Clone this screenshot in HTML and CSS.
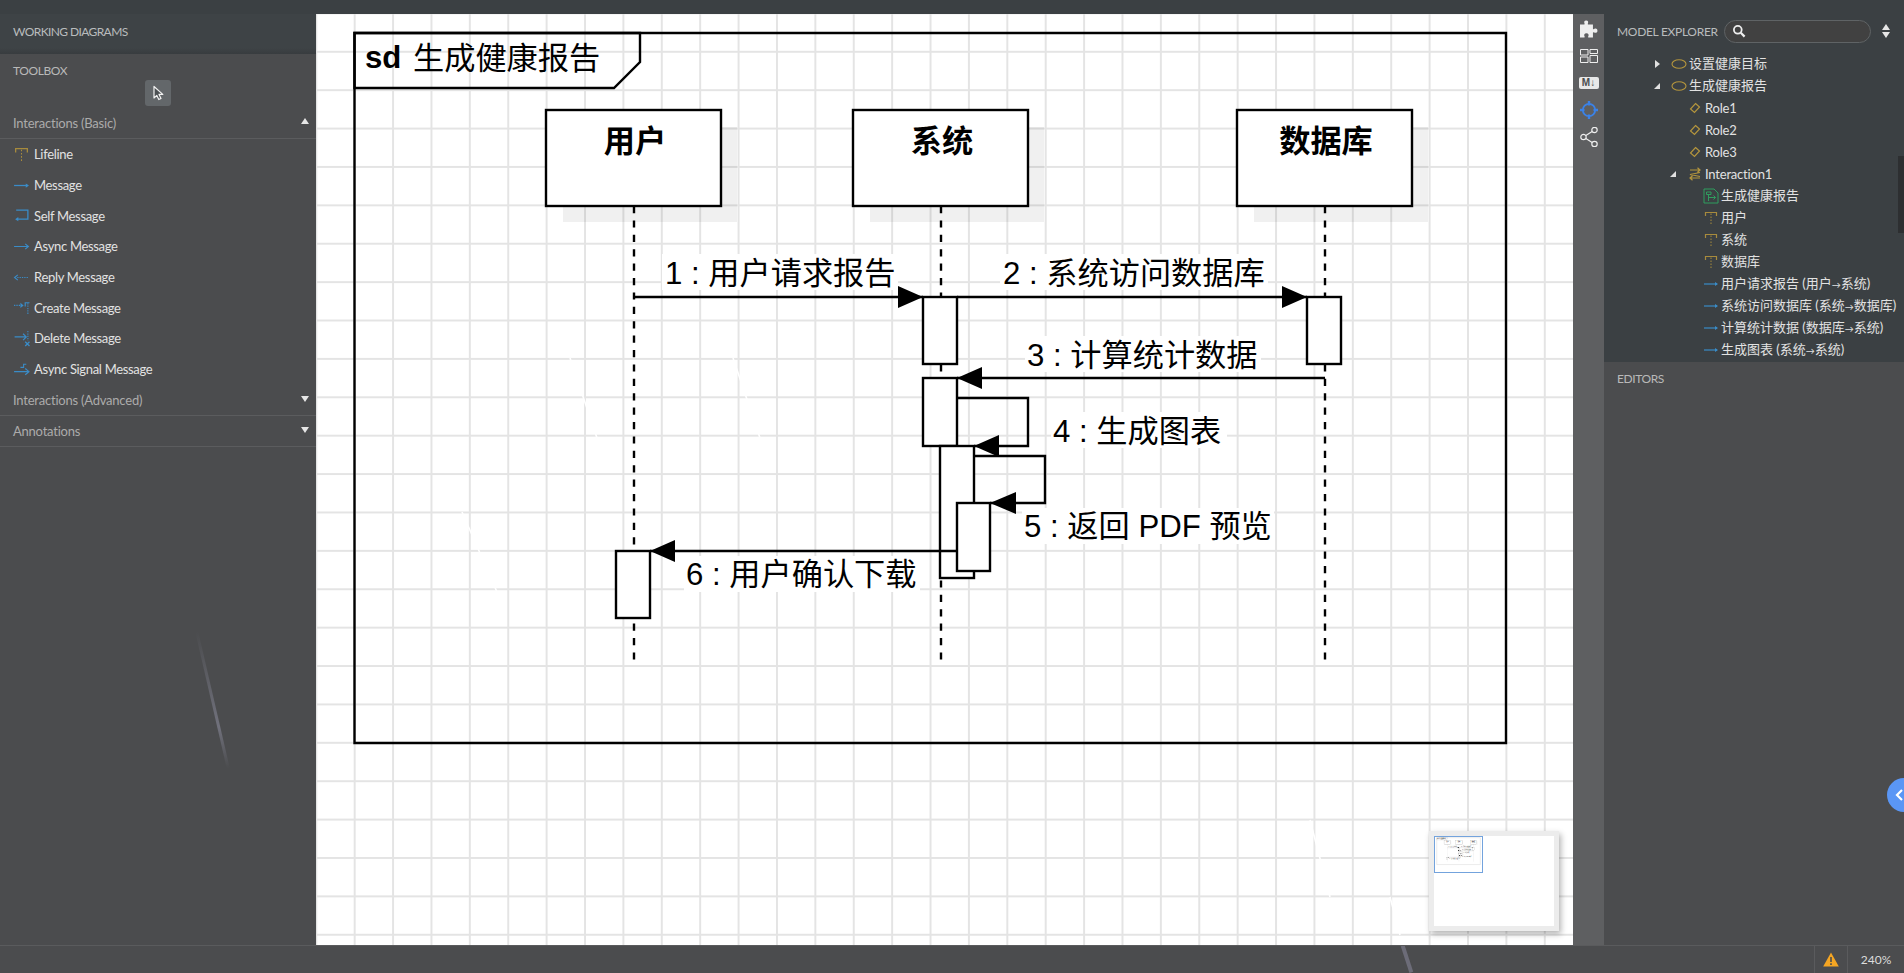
FILE: index.html
```html
<!DOCTYPE html>
<html lang="zh">

<head>
    <meta charset="UTF-8">
    <meta name="viewport" content="width=device-width, initial-scale=1.0">
    <title>StarUML</title>
    <link rel="stylesheet" href="styles.css">
</head>

<body>

    <svg class="sprite" aria-hidden="true">
        <symbol id="i-lifeline" viewBox="0 0 16 16">
            <path d="M2.5 6V2.5H13.5V6" fill="none" stroke="#a78b3d" stroke-width="1.2" />
            <path d="M8 3.5V15" fill="none" stroke="#a78b3d" stroke-width="1" stroke-dasharray="1.5 1.5" />
        </symbol>
        <symbol id="i-message" viewBox="0 0 16 16">
            <path d="M1 8H14" stroke="#3a8cc8" stroke-width="1.2" />
            <path d="M12 6L15 8L12 10Z" fill="#3a8cc8" />
        </symbol>
        <symbol id="i-self" viewBox="0 0 16 16">
            <path d="M3 3H14V11.5H4" fill="none" stroke="#3a8cc8" stroke-width="1.2" />
            <path d="M5 9.5L2 11.5L5 13.5Z" fill="#3a8cc8" />
        </symbol>
        <symbol id="i-async" viewBox="0 0 16 16">
            <path d="M1 8H14.5M11.5 5.5L14.5 8L11.5 10.5" fill="none" stroke="#3a8cc8" stroke-width="1.1" />
        </symbol>
        <symbol id="i-reply" viewBox="0 0 16 16">
            <path d="M4 8H15" stroke="#3a8cc8" stroke-width="1" stroke-dasharray="1.2 1" />
            <path d="M4.5 5.5L1.5 8L4.5 10.5" fill="none" stroke="#3a8cc8" stroke-width="1.1" />
        </symbol>
        <symbol id="i-create" viewBox="0 0 16 16">
            <path d="M1 6H8" stroke="#3a8cc8" stroke-width="1" stroke-dasharray="1.2 1" />
            <path d="M7 3.5L10 6L7 8.5Z" fill="#3a8cc8" />
            <path d="M11.5 7V3.5H15.5" fill="none" stroke="#3a8cc8" stroke-width="1.1" />
            <path d="M14 4V15" stroke="#3a8cc8" stroke-width="1" stroke-dasharray="1.2 1" />
        </symbol>
        <symbol id="i-delete" viewBox="0 0 16 16">
            <path d="M1.5 6.5H12M9.5 3.5L12.5 6.5L9.5 9.5" fill="none" stroke="#3a8cc8" stroke-width="1.1" />
            <path d="M14 1V10" stroke="#3a8cc8" stroke-width="1" stroke-dasharray="1.2 1" />
            <path d="M11.5 11L15.5 15M15.5 11L11.5 15" stroke="#3a8cc8" stroke-width="1.2" />
        </symbol>
        <symbol id="i-signal" viewBox="0 0 16 16">
            <path d="M1 10H15M11.5 7L15 10L11.5 13" fill="none" stroke="#3a8cc8" stroke-width="1.1" />
            <path d="M7 6H10V3H12.5" fill="none" stroke="#3a8cc8" stroke-width="1" />
        </symbol>
        <symbol id="i-oval" viewBox="0 0 16 16">
            <ellipse cx="8" cy="8" rx="7" ry="4.3" fill="none" stroke="#b4953d" stroke-width="1.1" />
        </symbol>
        <symbol id="i-role" viewBox="0 0 16 16">
            <path d="M8.5 3.5L12.5 7L7.5 12.5L3.5 9Z" fill="none" stroke="#b4953d" stroke-width="1.2" />
        </symbol>
        <symbol id="i-interaction" viewBox="0 0 16 16">
            <path d="M3 4H13M10.5 1.8L13 4L10.5 6.2M13 6.5L3 8.5L13 10.5M13 12H3M5.5 9.8L3 12L5.5 14.2" fill="none" stroke="#b4953d" stroke-width="1.2" />
        </symbol>
        <symbol id="i-sequence" viewBox="0 0 16 16">
            <path d="M1 1H11L15 5V15H1Z" fill="none" stroke="#2f9d5f" stroke-width="1" />
            <path d="M3.5 4H8V6.5H3.5ZM5.5 6.5V13M6 9.5H12.5M10.5 7.5L12.5 9.5L10.5 11.5" fill="none" stroke="#2f9d5f" stroke-width="1" />
        </symbol>
    </svg>

    <div class="topbar"></div>

    <div class="workspace">

        <aside class="sidebar">
            <div class="working-title">WORKING DIAGRAMS</div>
            <div class="section-label">TOOLBOX</div>
            <div class="tool-row">
                <span class="tool-btn">
                    <svg width="14" height="16" viewBox="0 0 14 16">
                        <path d="M3 1.5V13L5.8 10.4L7.8 14.5L10 13.4L8 9.4H11.8Z" fill="#4c5053" stroke="#f2f2f2" stroke-width="1.2" stroke-linejoin="round" />
                    </svg>
                </span>
            </div>

            <div class="group-head group-open">Interactions (Basic)<span class="caret caret-up"></span></div>
            <ul class="tool-list">
                <li><svg class="tool-icon"><use href="#i-lifeline" /></svg>Lifeline</li>
                <li><svg class="tool-icon"><use href="#i-message" /></svg>Message</li>
                <li><svg class="tool-icon"><use href="#i-self" /></svg>Self Message</li>
                <li><svg class="tool-icon"><use href="#i-async" /></svg>Async Message</li>
                <li><svg class="tool-icon"><use href="#i-reply" /></svg>Reply Message</li>
                <li><svg class="tool-icon"><use href="#i-create" /></svg>Create Message</li>
                <li><svg class="tool-icon"><use href="#i-delete" /></svg>Delete Message</li>
                <li><svg class="tool-icon"><use href="#i-signal" /></svg>Async Signal Message</li>
            </ul>
            <div class="group-head">Interactions (Advanced)<span class="caret caret-down"></span></div>
            <div class="group-head">Annotations<span class="caret caret-down"></span></div>
            <span class="streak streak-side"></span>
        </aside>

        <main class="canvas">
            <svg class="diagram" viewBox="316 14 1257 931">
                <g id="diagram-art">
                    <g class="scratches">
                        <path d="M733 358L760 438M570 358L597 438M462 512L497 592M1310 820L1330 897M1390 897L1400 935" />
                    </g>

                    <path class="shape" d="M354.500 33H1506V743H354.500Z" />
                    <path class="shape" d="M354.500 33H640V62L614 88H354.500Z" />
                    <text class="label bold" x="365" y="68">sd</text>
                    <text class="label" x="413" y="69">生成健康报告</text>

                    <rect class="shadow" x="563" y="127" width="174" height="95" />
                    <rect class="shadow" x="870" y="127" width="174" height="95" />
                    <rect class="shadow" x="1254" y="127" width="174" height="95" />
                    <rect class="box" x="546" y="110" width="175" height="96" />
                    <rect class="box" x="853" y="110" width="175" height="96" />
                    <rect class="box" x="1237" y="110" width="175" height="96" />
                    <text class="label bold mid" x="635" y="152">用户</text>
                    <text class="label bold mid" x="942" y="152">系统</text>
                    <text class="label bold mid" x="1326" y="152">数据库</text>

                    <path class="dash" d="M634 206V662M941 206V662M1325 206V662" />

                    <rect class="halo" x="662" y="254" width="236" height="36" />
                    <rect class="halo" x="1000" y="254" width="268" height="36" />
                    <rect class="halo" x="1025" y="336" width="236" height="36" />
                    <rect class="halo" x="1051" y="412" width="176" height="36" />
                    <rect class="halo" x="1022" y="508" width="252" height="36" />
                    <rect class="halo" x="684" y="556" width="236" height="36" />
                    <text class="label" x="665" y="284">1 : 用户请求报告</text>
                    <text class="label" x="1003" y="284">2 : 系统访问数据库</text>
                    <text class="label" x="1027" y="366">3 : 计算统计数据</text>
                    <text class="label" x="1053" y="442">4 : 生成图表</text>
                    <text class="label" x="1024" y="537">5 : 返回 PDF 预览</text>
                    <text class="label" x="686" y="585">6 : 用户确认下载</text>

                    <rect class="box" x="923" y="297" width="34" height="67" />
                    <rect class="box" x="1307" y="297" width="34" height="67" />
                    <rect class="box" x="923" y="378" width="34" height="68" />
                    <rect class="box" x="940" y="446" width="34" height="132" />
                    <rect class="box" x="957" y="503" width="33" height="68" />
                    <rect class="box" x="616" y="551" width="34" height="67" />

                    <path class="line" d="M634 297H923M957 297H1307M1325 378H957" />
                    <path class="line" d="M957 398H1028V446H974" />
                    <path class="line" d="M974 456H1045V503H990" />
                    <path class="line" d="M957 551H650" />
                    <path d="M923 297L898 286V308ZM1307 297L1282 286V308ZM957 378L982 367V389ZM974 446L999 435V457ZM990 503L1016 492V514ZM650 551L675 540V562Z" />
                </g>
            </svg>

            <div class="minimap">
                <svg class="minimap-art" viewBox="316 14 1225 925">
                    <use href="#diagram-art" />
                </svg>
            </div>
        </main>

        <nav class="toolstrip">
            <svg width="18" height="18" viewBox="1 1 16 16">
                <path d="M6.500 1.500C8.300 1.500 8.600 2.800 8 4C7.700 4.600 8 5 8.600 5H12.500V8.600C12.500 9.300 13 9.400 13.600 9C14.900 8.200 16.500 8.700 16.500 10.500C16.500 12.300 14.900 12.800 13.600 12C13 11.600 12.500 11.800 12.500 12.400V16.500H8.800C8.100 16.500 8 16 8.400 15.400C9.100 14.100 8.500 12.700 6.700 12.700C4.900 12.700 4.300 14.100 5 15.400C5.400 16 5.200 16.500 4.600 16.500H1V5H4.400C5 5 5.300 4.600 5 4C4.400 2.800 4.700 1.500 6.500 1.500Z" fill="#eeeeee" />
            </svg>
            <svg width="18" height="14" viewBox="0 0 18 14">
                <path d="M.5.5H8V6H.5ZM10 .5H17.500V4.500H10ZM.5 8H8V13.500H.5ZM10 6.500H17.500V13.500H10Z" fill="none" stroke="#eeeeee" stroke-width="1" />
            </svg>
            <span class="md-badge">M↓</span>
            <svg width="18" height="18" viewBox="0 0 18 18">
                <circle cx="9" cy="9" r="6.200" fill="none" stroke="#3b82e8" stroke-width="1.800" />
                <path d="M9 0V4.500M9 13.500V18M0 9H4.500M13.500 9H18" stroke="#3b82e8" stroke-width="2.400" />
            </svg>
            <svg width="18" height="20" viewBox="0 0 18 20">
                <path d="M3.500 10L14.500 3M3.500 10L14.500 17" stroke="#eeeeee" stroke-width="1.200" />
                <circle cx="3.500" cy="10" r="2.700" fill="#5e5f61" stroke="#eeeeee" stroke-width="1.200" />
                <circle cx="14.500" cy="3" r="2.700" fill="#5e5f61" stroke="#eeeeee" stroke-width="1.200" />
                <circle cx="14.500" cy="17" r="2.700" fill="#5e5f61" stroke="#eeeeee" stroke-width="1.200" />
            </svg>
        </nav>

        <aside class="rightbar">
            <section class="explorer">
                <div class="explorer-head">
                    <span class="explorer-title">MODEL EXPLORER</span>
                    <div class="search">
                        <svg width="14" height="14" viewBox="0 0 14 14">
                            <circle cx="5.800" cy="5.800" r="3.900" fill="none" stroke="#eeeeee" stroke-width="1.800" />
                            <path d="M8.800 8.800L12.600 12.600" stroke="#eeeeee" stroke-width="2.200" />
                        </svg>
                    </div>
                    <div class="sorter">
                        <span class="caret caret-up"></span>
                        <span class="caret caret-down"></span>
                    </div>
                </div>

                <ul class="tree">
                    <li class="lvl1"><span class="twist twist-closed"></span><svg class="tree-icon"><use href="#i-oval" /></svg><span class="zh">设置健康目标</span></li>
                    <li class="lvl1"><span class="twist twist-open"></span><svg class="tree-icon"><use href="#i-oval" /></svg><span class="zh">生成健康报告</span></li>
                    <li class="lvl2"><span class="twist"></span><svg class="tree-icon"><use href="#i-role" /></svg>Role1</li>
                    <li class="lvl2"><span class="twist"></span><svg class="tree-icon"><use href="#i-role" /></svg>Role2</li>
                    <li class="lvl2"><span class="twist"></span><svg class="tree-icon"><use href="#i-role" /></svg>Role3</li>
                    <li class="lvl2"><span class="twist twist-open"></span><svg class="tree-icon"><use href="#i-interaction" /></svg>Interaction1</li>
                    <li class="lvl3"><span class="twist"></span><svg class="tree-icon"><use href="#i-sequence" /></svg><span class="zh">生成健康报告</span></li>
                    <li class="lvl3"><span class="twist"></span><svg class="tree-icon"><use href="#i-lifeline" /></svg><span class="zh">用户</span></li>
                    <li class="lvl3"><span class="twist"></span><svg class="tree-icon"><use href="#i-lifeline" /></svg><span class="zh">系统</span></li>
                    <li class="lvl3"><span class="twist"></span><svg class="tree-icon"><use href="#i-lifeline" /></svg><span class="zh">数据库</span></li>
                    <li class="lvl3"><span class="twist"></span><svg class="tree-icon"><use href="#i-message" /></svg><span class="zh">用户请求报告 (用户<span class="arr">→</span>系统)</span></li>
                    <li class="lvl3"><span class="twist"></span><svg class="tree-icon"><use href="#i-message" /></svg><span class="zh">系统访问数据库 (系统<span class="arr">→</span>数据库)</span></li>
                    <li class="lvl3"><span class="twist"></span><svg class="tree-icon"><use href="#i-message" /></svg><span class="zh">计算统计数据 (数据库<span class="arr">→</span>系统)</span></li>
                    <li class="lvl3"><span class="twist"></span><svg class="tree-icon"><use href="#i-message" /></svg><span class="zh">生成图表 (系统<span class="arr">→</span>系统)</span></li>
                </ul>
                <span class="scrollbar"></span>
            </section>

            <section class="editors">
                <div class="section-label">EDITORS</div>
                <button class="collapse-btn" type="button" aria-label="collapse">
                    <svg width="9" height="14" viewBox="0 0 9 14">
                        <path d="M7 2L2 7L7 12" fill="none" stroke="#ffffff" stroke-width="2.200" />
                    </svg>
                </button>
            </section>
        </aside>
    </div>

    <footer class="statusbar">
        <span class="streak streak-bottom"></span>
        <div class="status-cell">
            <svg width="16" height="15" viewBox="0 0 16 15">
                <path d="M8 .5L15.800 14.500H.2Z" fill="#f5a623" />
                <path d="M8 5V10M8 11.300V13" stroke="#4b4c4e" stroke-width="1.600" />
            </svg>
        </div>
        <div class="status-cell zoom-level">240%</div>
    </footer>

</body>

</html>
```

FILE: styles.css
```css
* {
    box-sizing: border-box;
}

html {
    overflow: hidden;
}

body {
    font-family: 'Lato', 'Noto Sans CJK SC', sans-serif;
    margin: 0;
    height: 100vh;
    overflow: hidden;
    background-color: #4b4c4e;
    color: #e2e2e2;
    display: flex;
    flex-direction: column;
    font-size: 13px;
}

ul {
    list-style: none;
    margin: 0;
    padding: 0;
}

.sprite {
    position: absolute;
    width: 0;
    height: 0;
}

.topbar {
    height: 14px;
    background-color: #3b4043;
}

.workspace {
    flex: 1;
    min-height: 0;
    display: grid;
    grid-template-columns: 316px 1fr 31px 300px;
    grid-template-rows: minmax(0, 1fr);
}

/* left side */
.sidebar {
    position: relative;
    overflow: hidden;
    background-color: #4b4c4e;
}

.working-title {
    height: 40px;
    padding: 10px 13px 0;
    font-size: 12px;
    letter-spacing: -0.6px;
    color: #b9bcbd;
    background: linear-gradient(#3e4346 85%, #383c3f);
}

.section-label {
    height: 26px;
    padding: 9px 13px 0;
    font-size: 12px;
    line-height: 16px;
    letter-spacing: -0.4px;
    color: #b9b9b9;
}

.tool-row {
    display: flex;
    justify-content: center;
    padding-bottom: 1px;
}

.tool-btn {
    width: 26px;
    height: 26px;
    display: flex;
    align-items: center;
    justify-content: center;
    border-radius: 3px;
    background-color: #63676a;
}

.group-head {
    position: relative;
    height: 31px;
    padding: 7px 13px 0;
    line-height: 17px;
    letter-spacing: -0.22px;
    color: #ababab;
    border-bottom: 1px solid #5b5c5e;
}

.group-open {
    height: 32px;
    padding-top: 8px;
}

.caret {
    display: block;
    width: 0;
    height: 0;
    border-left: 4px solid transparent;
    border-right: 4px solid transparent;
}

.caret-up {
    border-bottom: 6px solid #e6e6e6;
}

.caret-down {
    border-top: 6px solid #e6e6e6;
}

.group-head .caret {
    position: absolute;
    right: 7px;
    top: 11px;
}

.tool-list li {
    height: 30.7px;
    display: flex;
    align-items: center;
    gap: 4px;
    padding-left: 13px;
    letter-spacing: -0.32px;
}

.tool-icon {
    width: 17px;
    height: 17px;
}

.streak {
    position: absolute;
    background: linear-gradient(rgba(150, 150, 170, 0), rgba(150, 150, 170, 0.5) 70%, rgba(150, 150, 170, 0));
}

.streak-side {
    left: 211px;
    top: 616px;
    width: 2.5px;
    height: 140px;
    transform: rotate(-13deg);
}

/* canvas */
.canvas {
    position: relative;
    overflow: hidden;
    background-color: #fff;
    background-image:
        linear-gradient(to right, #e4e4e4 2.4px, transparent 2.4px),
        linear-gradient(to bottom, #e4e4e4 2.4px, transparent 2.4px);
    background-size: 38.4px 38.4px;
    background-position: 37.7px 36.8px;
}

.diagram {
    display: block;
    width: 100%;
    height: 100%;
}

.diagram text {
    font-family: 'Liberation Sans', 'Noto Sans CJK SC', sans-serif;
    font-size: 31.2px;
    fill: #000;
}

.diagram .bold {
    font-weight: bold;
}

.diagram .mid {
    text-anchor: middle;
}

.shape {
    fill: none;
    stroke: #000;
    stroke-width: 2.4;
}

.shadow {
    fill: #000;
    fill-opacity: 0.06;
}

.box {
    fill: #fff;
    stroke: #000;
    stroke-width: 2.4;
}

.halo {
    fill: #fff;
}

.dash {
    fill: none;
    stroke: #000;
    stroke-width: 2.4;
    stroke-dasharray: 7.2 7.2;
}

.line {
    fill: none;
    stroke: #000;
    stroke-width: 2.4;
}

.scratches path {
    fill: none;
    stroke: #fff;
    stroke-width: 1.6;
}

.minimap {
    position: absolute;
    right: 14px;
    bottom: 14px;
    width: 130px;
    height: 100px;
    background-color: #fff;
    border: 5px solid #ececec;
    box-shadow: 2px 3px 6px rgba(0, 0, 0, 0.3);
}

.minimap-art {
    display: block;
    width: 49px;
    height: 37px;
    border: 1.5px solid #5b93d8;
    opacity: 0.85;
}

/* tool strip */
.toolstrip {
    display: grid;
    grid-auto-rows: 27px;
    justify-items: center;
    align-items: center;
    align-content: start;
    padding-top: 1px;
    background-color: #5e5f61;
}

.md-badge {
    width: 20px;
    height: 12px;
    border-radius: 2px;
    background-color: #e8e8e8;
    color: #4b4c4e;
    font-family: 'Liberation Sans', sans-serif;
    font-size: 10px;
    font-weight: bold;
    line-height: 12px;
    text-align: center;
}

/* right side */
.rightbar {
    display: flex;
    flex-direction: column;
    min-height: 0;
    overflow: hidden;
}

.explorer {
    position: relative;
    height: 348px;
    overflow: hidden;
    background-color: #3b4043;
}

.explorer-head {
    height: 34px;
    display: flex;
    align-items: center;
    padding-left: 13px;
    font-size: 12px;
    color: #b9bcbd;
}

.explorer-title {
    width: 107px;
    flex: none;
    letter-spacing: -0.3px;
}

.search {
    width: 147px;
    height: 23px;
    padding-left: 7px;
    display: flex;
    align-items: center;
    border: 1px solid #5f6365;
    border-radius: 12px;
    background-color: #414141;
}

.sorter {
    margin-left: 11px;
    display: flex;
    flex-direction: column;
    gap: 2px;
}

.tree {
    padding-top: 5px;
}

.tree li {
    height: 22px;
    display: flex;
    align-items: center;
    white-space: nowrap;
    letter-spacing: -0.2px;
}

.zh {
    margin-bottom: 3px;
    letter-spacing: 0;
}

.arr {
    font-size: 9px;
}

.lvl1 {
    padding-left: 48px;
}

.lvl2 {
    padding-left: 64px;
}

.lvl3 {
    padding-left: 80px;
}

.twist {
    position: relative;
    width: 16px;
    height: 22px;
    flex: none;
}

.twist-closed::before {
    content: '';
    position: absolute;
    left: 3px;
    top: 7px;
    border-left: 5px solid #e0e0e0;
    border-top: 4px solid transparent;
    border-bottom: 4px solid transparent;
}

.twist-open::before {
    content: '';
    position: absolute;
    left: 2px;
    top: 8px;
    border-bottom: 6px solid #e0e0e0;
    border-left: 6px solid transparent;
}

.tree-icon {
    width: 16px;
    height: 16px;
    margin: 0 2px 0 3px;
    flex: none;
}

.scrollbar {
    position: absolute;
    right: 0;
    top: 142px;
    width: 6px;
    height: 77px;
    background-color: #2d2f31;
}

.editors {
    position: relative;
    flex: 1;
    background-color: #4b4c4e;
}

.collapse-btn {
    position: absolute;
    right: -17px;
    top: 416px;
    width: 34px;
    height: 34px;
    padding: 0 0 0 8px;
    display: flex;
    align-items: center;
    border: 0;
    border-radius: 50%;
    background-color: #5a96f5;
}

/* status bar */
.statusbar {
    position: relative;
    height: 28px;
    overflow: hidden;
    display: flex;
    justify-content: flex-end;
    border-top: 1px solid #5a5b5d;
    background-color: #4b4c4e;
}

.status-cell {
    display: flex;
    align-items: center;
    justify-content: center;
    width: 33px;
    border-left: 1px solid #5a5b5d;
}

.zoom-level {
    width: 57px;
    font-size: 12px;
    color: #dcdcdc;
}

.streak-bottom {
    left: 1405px;
    top: -1px;
    width: 4px;
    height: 28px;
    transform: rotate(-18deg);
    background: #6c6c78;
}
```
